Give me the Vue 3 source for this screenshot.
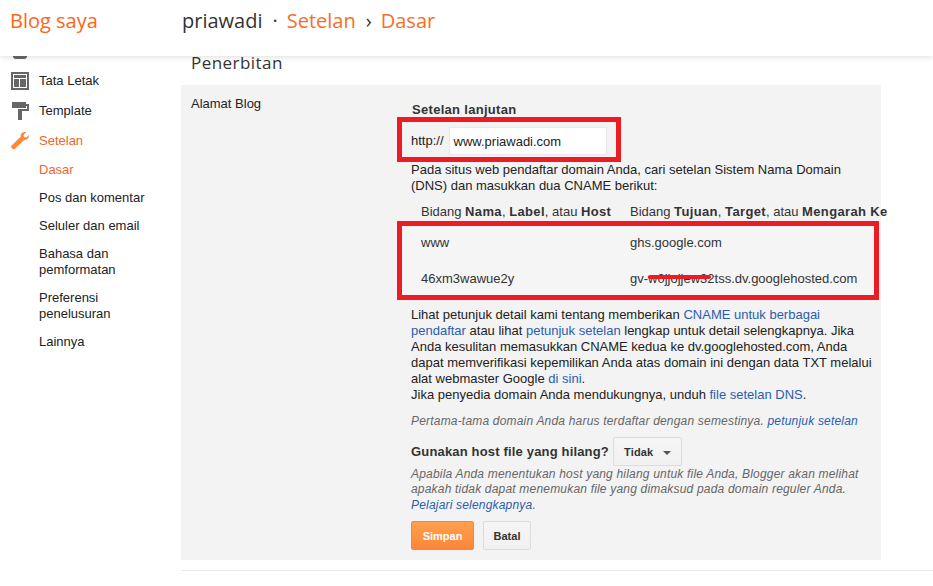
<template>
  <div class="page">
    <header class="topbar">
      <div class="brand">Blog saya</div>
      <div class="crumbs">
        <span>priawadi</span>
        <span class="dot">·</span>
        <span class="orange">Setelan</span>
        <span class="sep">›</span>
        <span class="orange">Dasar</span>
      </div>
    </header>

    <div class="content">
      <aside class="sidebar">
        <div class="cut-icon"></div>
        <div class="nav-item">
          <svg width="18" height="18" viewBox="0 0 18 18">
            <path fill="#666" fill-rule="evenodd" d="M0 0h18v18H0zM2 2v14h14V2z" />
            <path fill="#666" d="M3 3h12v3H3zM3 7h5v8H3zM9 7h6v8H9z" />
          </svg>
          <span>Tata Letak</span>
        </div>
        <div class="nav-item">
          <svg width="18" height="18" viewBox="0 0 18 18">
            <path fill="#666" d="M1 0h14v2h3v7h-7v9H7V7h9V4h-1v2H1z" />
          </svg>
          <span>Template</span>
        </div>
        <div class="nav-item active">
          <svg width="18" height="18" viewBox="0 0 18 18">
            <path fill="#ff8833" d="M18 3.600c0 2.600-2.200 4.700-4.800 4.400L4 16.800c-.7.7-1.800.7-2.500 0l-.8-.8c-.7-.7-.7-1.800 0-2.500L9.800 4.500C9.300 1.900 11.400 0 14 0c.5 0 .9.100 1.300.2l-2.700 2.500.4 2.200 2.300.5L17.700 3c.2.200.3.400.3.600z" />
          </svg>
          <span>Setelan</span>
        </div>
        <ul class="subnav">
          <li v-for="item in subItems" :key="item" :class="{ current: item === 'Dasar' }">{{ item }}</li>
        </ul>
      </aside>

      <main class="main">
        <h2 class="title">Penerbitan</h2>
        <section class="panel">
          <div class="label">Alamat Blog</div>
          <div class="fields">
            <div class="heading">Setelan lanjutan</div>
            <div class="url-box">
              <span>http://</span>
              <div class="input">www.priawadi.com</div>
            </div>
            <p class="intro">
              Pada situs web pendaftar domain Anda, cari setelan Sistem Nama Domain<br />
              (DNS) dan masukkan dua CNAME berikut:
            </p>

            <div class="cname-head">
              <div class="col-a">Bidang <b>Nama</b>, <b>Label</b>, atau <b>Host</b></div>
              <div>Bidang <b>Tujuan</b>, <b>Target</b>, atau <b>Mengarah Ke</b></div>
            </div>
            <div class="cname-box">
              <div class="cname-row">
                <div class="col-a">www</div>
                <div>ghs.google.com</div>
              </div>
              <div class="cname-row">
                <div class="col-a">46xm3wawue2y</div>
                <div>gv-w0jjojjew32tss.dv.googlehosted.com</div>
              </div>
              <div class="scribble"></div>
            </div>

            <p class="detail">
              Lihat petunjuk detail kami tentang memberikan <a>CNAME untuk berbagai<br />pendaftar</a>
              atau lihat <a>petunjuk setelan</a> lengkap untuk detail selengkapnya. Jika<br />
              Anda kesulitan memasukkan CNAME kedua ke dv.googlehosted.com, Anda<br />
              dapat memverifikasi kepemilikan Anda atas domain ini dengan data TXT melalui<br />
              alat webmaster Google <a>di sini</a>.<br />
              Jika penyedia domain Anda mendukungnya, unduh <a>file setelan DNS</a>.
            </p>
            <p class="note first-note">
              Pertama-tama domain Anda harus terdaftar dengan semestinya. <a>petunjuk setelan</a>
            </p>

            <div class="missing">
              <b>Gunakan host file yang hilang?</b>
              <div class="select">Tidak<i class="caret"></i></div>
            </div>
            <p class="note hint">
              Apabila Anda menentukan host yang hilang untuk file Anda, Blogger akan melihat<br />
              apakah tidak dapat menemukan file yang dimaksud pada domain reguler Anda.<br />
              <a>Pelajari selengkapnya</a>.
            </p>

            <div class="actions">
              <button class="save">Simpan</button>
              <button class="cancel">Batal</button>
            </div>
          </div>
        </section>
        <div class="rule"></div>
      </main>
    </div>
  </div>
</template>

<script setup>
const subItems = [
  "Dasar",
  "Pos dan komentar",
  "Seluler dan email",
  "Bahasa dan pemformatan",
  "Preferensi penelusuran",
  "Lainnya",
];
</script>

<style>
html,
body {
  margin: 0;
  background: #fff;
}
</style>

<style scoped>
.page {
  width: 933px;
  height: 586px;
  overflow: hidden;
  font-family: "Liberation Sans", Arial, sans-serif;
  font-size: 13px;
  line-height: 16px;
  color: #222;
  background: #fff;
}
.topbar {
  height: 56px;
  display: flex;
  box-shadow: 0 1px 6px rgba(0, 0, 0, 0.14);
  position: relative;
  z-index: 2;
  background: #fff;
  font-family: "Open Sans", sans-serif;
  font-size: 20px;
  line-height: 28px;
  padding-top: 7px;
  box-sizing: border-box;
}
.brand {
  width: 182px;
  padding-left: 10px;
  box-sizing: border-box;
  color: #ff6514;
}
.crumbs {
  color: #333;
  display: flex;
  gap: 8px;
}
.orange {
  color: #f3702b;
}
.dot {
  margin: 0 1px 0 2px;
}
.sep {
  margin: 0 1px 0 2px;
}
.content {
  display: flex;
}
.sidebar {
  width: 181px;
  flex: none;
  padding-left: 11px;
  box-sizing: border-box;
}
.cut-icon {
  width: 14px;
  height: 3px;
  margin-left: 2px;
  background: #666;
  border-radius: 0 0 7px 7px;
  margin-bottom: 7px;
}
.nav-item {
  height: 30px;
  display: flex;
  align-items: center;
  gap: 10px;
  color: #222;
}
.nav-item.active {
  color: #f3642b;
}
.subnav {
  list-style: none;
  margin: 0;
  padding: 0 0 0 28px;
}
.subnav li {
  margin-bottom: 12px;
  width: 110px;
}
.subnav li:first-child {
  margin-top: 6px;
}
.subnav .current {
  color: #f3642b;
}
.main {
  width: 700px;
}
.title {
  margin: 0;
  height: 29px;
  padding: 0 0 0 10px;
  font-family: "Open Sans", sans-serif;
  font-weight: 400;
  font-size: 17px;
  line-height: 13px;
  color: #333;
  letter-spacing: 0.45px;
}
.panel {
  height: 475px;
  background: #f3f3f3;
  display: flex;
  padding-top: 10px;
  box-sizing: border-box;
}
.label {
  width: 230px;
  padding: 1px 0 0 10px;
  box-sizing: border-box;
}
.fields {
  width: 470px;
  flex: none;
}
.heading {
  height: 15px;
  font-weight: 700;
  color: #333;
  padding-left: 1px;
  margin-top: 7px;
  letter-spacing: 0.3px;
}
.url-box {
  width: 224px;
  height: 45px;
  margin-left: -14px;
  border: 5px solid #ed1c24;
  box-sizing: border-box;
  display: flex;
  align-items: center;
  gap: 5px;
  padding: 3px 0 0 9px;
}
.input {
  width: 158px;
  height: 28px;
  box-sizing: border-box;
  background: #fff;
  border: 1px solid #e8e8e8;
  padding: 6px 4px;
}
.intro {
  margin: 0;
}
.cname-head {
  display: flex;
  width: 500px;
  height: 17px;
  margin-top: 10px;
  padding-left: 10px;
  box-sizing: border-box;
  white-space: nowrap;
  color: #333;
}
.cname-head b {
  letter-spacing: 0.35px;
}
.col-a {
  width: 209px;
  flex: none;
}
.cname-box {
  width: 482px;
  height: 79px;
  margin-left: -14px;
  border: 5px solid #ed1c24;
  box-sizing: border-box;
  position: relative;
  background: #f5f5f5;
}
.cname-row {
  display: flex;
  height: 36px;
  padding: 0 0 0 19px;
  align-items: center;
  white-space: nowrap;
  color: #333;
}
.cname-row:first-child {
  margin-top: -1px;
}
.scribble {
  position: absolute;
  left: 246px;
  top: 49px;
  width: 63px;
  height: 4px;
  border-radius: 2px;
  background: #ed1c24;
}
.detail {
  margin: 7px 0 0;
  white-space: nowrap;
}
a {
  color: #2a5db0;
}
.note {
  margin: 0;
  font-style: italic;
  color: #666;
  font-size: 12px;
  letter-spacing: 0.19px;
  line-height: 15.500px;
  white-space: nowrap;
}
.first-note {
  margin-top: 11px;
}
.missing {
  display: flex;
  align-items: center;
  gap: 4px;
  margin-top: 7px;
  color: #333;
  letter-spacing: 0.17px;
}
.missing b {
  padding-top: 1px;
}
.hint {
  margin-top: 1px;
}
.select {
  width: 69px;
  height: 29px;
  box-sizing: border-box;
  border: 1px solid #dcdcdc;
  border-radius: 2px;
  background: linear-gradient(#f5f5f5, #f1f1f1);
  font-size: 11px;
  font-weight: 700;
  color: #333;
  padding: 6px 0 0 10px;
  position: relative;
}
.caret {
  position: absolute;
  left: 49px;
  top: 13px;
  border: 4px solid transparent;
  border-top-color: #555;
  border-bottom: 0;
}
.actions {
  display: flex;
  gap: 9px;
  margin-top: 8px;
}
button {
  height: 29px;
  border-radius: 2px;
  font-family: inherit;
  font-size: 11px;
  font-weight: 700;
  padding: 0;
}
.save {
  width: 63px;
  border: 1px solid #f0883a;
  background: linear-gradient(#ffa04f, #fb8636);
  color: #fff;
}
.cancel {
  width: 48px;
  border: 1px solid #dcdcdc;
  background: linear-gradient(#f5f5f5, #f1f1f1);
  color: #333;
}
.rule {
  height: 1px;
  background: #e8e8e8;
  margin-top: 10px;
  width: 752px;
}
</style>
